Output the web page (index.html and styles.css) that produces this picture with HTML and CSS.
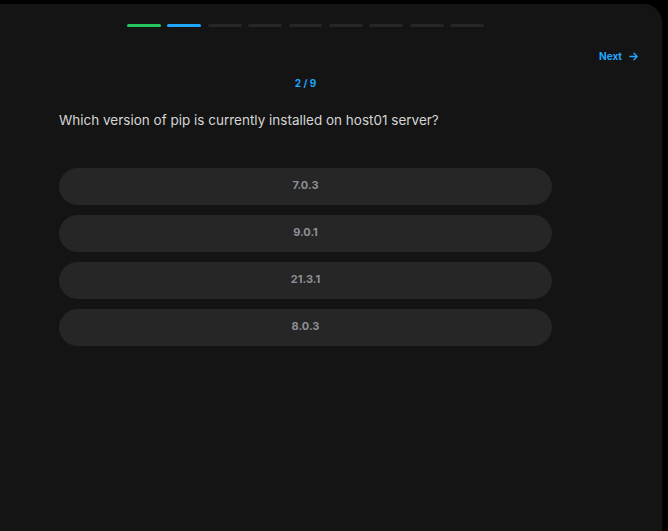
FILE: index.html
```html
<!DOCTYPE html>
<html lang="en">
<head>
<meta charset="utf-8">
<title>Quiz</title>
<link rel="stylesheet" href="styles.css">
</head>
<body>
<div class="card">
  <div class="progress">
    <span class="seg done"></span>
    <span class="seg current"></span>
    <span class="seg"></span>
    <span class="seg"></span>
    <span class="seg"></span>
    <span class="seg"></span>
    <span class="seg"></span>
    <span class="seg"></span>
    <span class="seg"></span>
  </div>
  <div class="nav">
    <button class="next">Next
      <svg width="11" height="11" viewBox="0 0 24 24" fill="none" stroke="currentColor" stroke-width="3" stroke-linecap="round" stroke-linejoin="round"><path d="M4 12h16M13 5l7 7-7 7"/></svg>
    </button>
  </div>
  <div class="content">
    <div class="counter">2 / 9</div>
    <p class="question">Which version of pip is currently installed on host01 server?</p>
    <div class="options">
      <button class="option">7.0.3</button>
      <button class="option">9.0.1</button>
      <button class="option">21.3.1</button>
      <button class="option">8.0.3</button>
    </div>
  </div>
</div>
</body>
</html>
```
FILE: styles.css
```css
html, body {
  margin: 0;
  padding: 0;
  background: #000;
  font-family: Inter, "Noto Sans", sans-serif;
}
.card {
  margin-top: 4px;
  width: 662px;
  height: 527px;
  background: #141414;
  border-top-right-radius: 18px;
  display: flex;
  flex-direction: column;
}
.progress {
  display: flex;
  gap: 6.4px;
  width: 357px;
  margin: 20px 0 0 127px;
}
.seg {
  flex: 1;
  height: 3px;
  border-radius: 2px;
  background: #262626;
}
.seg.done { background: #22c55e; }
.seg.current { background: #1ea7fd; }
.nav {
  display: flex;
  justify-content: flex-end;
  padding-right: 23px;
  margin-top: 23px;
}
.next {
  display: flex;
  align-items: center;
  gap: 6px;
  background: none;
  border: 0;
  padding: 0;
  color: #1ea7fd;
  font-family: inherit;
  font-weight: 700;
  font-size: 10px;
  line-height: 12px;
}
.content {
  width: 493px;
  padding: 0 59px;
  display: flex;
  flex-direction: column;
}
.counter {
  margin-top: 15px;
  text-align: center;
  color: #1ea7fd;
  font-weight: 700;
  font-size: 10px;
  line-height: 12px;
}
.question {
  margin: 21px 0 0;
  color: #d4d4d4;
  font-size: 13.5px;
  line-height: 20px;
}
.options {
  margin-top: 38px;
  display: flex;
  flex-direction: column;
  gap: 10px;
}
.option {
  height: 37px;
  padding: 0 0 3px;
  border: 0;
  border-radius: 19px;
  background: #262626;
  color: #8b8f96;
  font-family: inherit;
  font-weight: 700;
  font-size: 11px;
}
```
